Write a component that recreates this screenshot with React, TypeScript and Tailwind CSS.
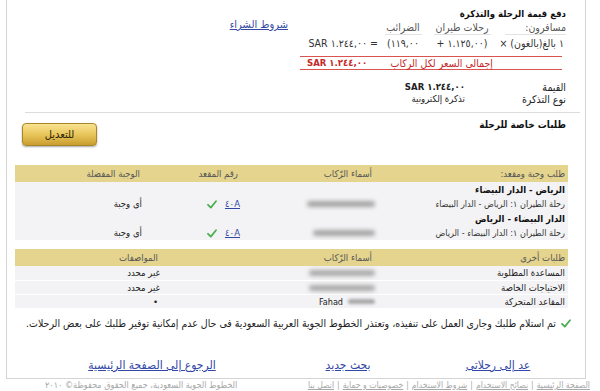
import React from "react";

const Check = () => (
  <svg width="10" height="9" viewBox="0 0 10 9" className="shrink-0">
    <path d="M1 4.8 L3.8 7.6 L9 1.2" fill="none" stroke="#4caf50" strokeWidth="1.8" strokeLinecap="round" strokeLinejoin="round" />
  </svg>
);

export default function App() {
  return (
    <div
      dir="ltr"
      className="w-[600px] h-[391px] bg-white overflow-hidden text-[9.5px] leading-[14px] text-[#222] [font-family:'DejaVu_Sans_Condensed','DejaVu_Sans',sans-serif] [font-stretch:condensed]"
    >
      <div dir="rtl" className="ml-[6px] w-[580px] h-[379px] border-l border-r border-b border-[#d4d4d4] flex flex-col">
        {/* Top: price section */}
        <div className="flex pr-[19px] pt-[7px]">
          <div className="w-[266px] shrink-0">
            <div className="font-bold h-[13px] leading-[13px] text-[#111]">دفع قيمة الرحلة والتذكرة</div>
            <div className="flex h-[15px] text-[#555] text-[10.5px]">
              <div className="w-[65px] flex">
                <span className="w-[61px] border-b border-[#e2e2e2] text-right whitespace-nowrap">مسافرون:</span>
              </div>
              <div className="w-[78px] flex justify-center">
                <span className="w-[57px] border-b border-[#e2e2e2] text-center whitespace-nowrap">رحلات طيران</span>
              </div>
              <div className="w-[40px] flex justify-center">
                <span className="w-[37px] border-b border-[#e2e2e2] text-center whitespace-nowrap">الضرائب</span>
              </div>
              <div className="flex-1" />
            </div>
            <div className="flex h-[16px] items-center text-[#333] text-[10.5px] whitespace-nowrap">
              <div className="w-[65px] text-right pr-[2px]">١ بالغ(بالغون) ×</div>
              <div className="w-[78px] text-center">(١.١٢٥,٠٠ +</div>
              <div className="w-[40px] text-center">١١٩,٠٠)</div>
              <div className="flex-1 text-right pr-[5px]">
                <span dir="ltr">SAR ١.٢٤٤,٠٠ =</span>
              </div>
            </div>
            <div className="mt-[5px] mr-[4px] w-[262px] h-[14px] border-t border-b border-[#d9534f] flex items-center text-[#c62828] whitespace-nowrap">
              <span className="pr-[69px] leading-[12px] text-[10.5px]">إجمالى السعر لكل الركاب</span>
              <span className="flex-1 text-left pl-[7px] font-bold leading-[12px]">
                <span dir="ltr">SAR ١.٢٤٤,٠٠</span>
              </span>
            </div>
            <div className="mt-[11px] flex h-[12px] items-center leading-[12px]">
              <span className="w-[101px] text-[#222] text-[10.5px]">القيمة</span>
              <span className="font-bold" dir="ltr">SAR ١.٢٤٤,٠٠</span>
            </div>
            <div className="flex h-[12px] items-center leading-[12px]">
              <span className="w-[101px] text-[#222] text-[10.5px]">نوع التذكرة</span>
              <span className="text-[#222]">تذكرة إلكترونية</span>
            </div>
          </div>
          <div className="mr-[12px] mt-[11px]">
            <a className="text-[#3247a5] underline whitespace-nowrap text-[11px]">شروط الشراء</a>
          </div>
        </div>

        <div className="mt-[7px] mr-[5px] ml-[18px] h-px bg-[#dcdcdc]" />

        {/* Special requests header */}
        <div className="flex justify-between items-start pr-[19px] pl-[15px]">
          <div className="mt-[5px] text-[10px] leading-[14px] font-bold text-[#111]">طلبات خاصة للرحلة</div>
          <button className="mt-[10px] w-[75px] h-[23px] rounded-[4px] border border-[#a8862a] bg-linear-to-b from-[#f8e390] via-[#e8c65a] to-[#c99d2e] shadow-[0_1px_2px_rgba(0,0,0,0.35)] text-[11px] leading-[20px] text-[#2d2206]">
            للتعديل
          </button>
        </div>

        {/* Table 1 */}
        <div className="mt-[19px] ml-[8px] mr-[17px]">
          <div className="flex h-[17px] items-center bg-[#e4d48e] text-[#555]">
            <div className="w-[190px] pr-[3px]">طلب وجبة ومقعد:</div>
            <div className="w-[135px] pr-[6px]">أسماء الرّكاب</div>
            <div className="w-[98px] pr-[5px]">رقم المقعد</div>
            <div className="flex-1 pr-[5px]">الوجبة المفضلة</div>
          </div>
          <div className="bg-[#f3f3f5]">
            <div className="flex h-[15px] items-center">
              <div className="pr-[3px] font-bold text-[#111]">الرياض - الدار البيضاء</div>
            </div>
            <div className="flex h-[14px] items-center">
              <div className="w-[190px] pr-[3px] text-[9px] text-[#333] whitespace-nowrap">رحلة الطيران ١: الرياض - الدار البيضاء</div>
              <div className="w-[135px] pr-[3px] flex">
                <span className="w-[68px] h-[6px] rounded-full bg-[#a4a4a4] blur-[2px]" />
              </div>
              <div className="w-[98px] pr-[3px] flex items-center gap-[8px]">
                <a className="text-[#3247a5] underline">٤٠A</a>
                <Check />
              </div>
              <div className="flex-1 pr-[3px] text-[#222]">أى وجبة</div>
            </div>
            <div className="flex h-[15px] items-center">
              <div className="pr-[3px] font-bold text-[#111]">الدار البيضاء - الرياض</div>
            </div>
            <div className="flex h-[14px] items-center">
              <div className="w-[190px] pr-[3px] text-[9px] text-[#333] whitespace-nowrap">رحلة الطيران ١: الدار البيضاء - الرياض</div>
              <div className="w-[135px] pr-[3px] flex">
                <span className="w-[62px] h-[6px] rounded-full bg-[#a4a4a4] blur-[2px]" />
              </div>
              <div className="w-[98px] pr-[3px] flex items-center gap-[8px]">
                <a className="text-[#3247a5] underline">٤٠A</a>
                <Check />
              </div>
              <div className="flex-1 pr-[3px] text-[#222]">أى وجبة</div>
            </div>
          </div>
        </div>

        {/* Table 2 */}
        <div className="mt-[9px] ml-[8px] mr-[17px]">
          <div className="flex h-[17px] items-center bg-[#e4d48e] text-[#555]">
            <div className="w-[190px] pr-[3px]">طلبات أخرى</div>
            <div className="w-[215px] pr-[6px]">أسماء الرّكاب</div>
            <div className="flex-1 pr-[5px]">المواصفات</div>
          </div>
          <div className="bg-[#f3f3f5] text-[#222]">
            <div className="flex h-[14px] items-center">
              <div className="w-[190px] pr-[3px]">المساعدة المطلوبة</div>
              <div className="w-[215px] pr-[3px] flex">
                <span className="w-[66px] h-[6px] rounded-full bg-[#a8a8a8] blur-[2px]" />
              </div>
              <div className="flex-1 pr-[3px]">غير محدد</div>
            </div>
            <div className="flex h-[14px] items-center border-t border-white">
              <div className="w-[190px] pr-[3px]">الاحتياجات الخاصة</div>
              <div className="w-[215px] pr-[3px] flex">
                <span className="w-[66px] h-[6px] rounded-full bg-[#a8a8a8] blur-[2px]" />
              </div>
              <div className="flex-1 pr-[3px]">غير محدد</div>
            </div>
            <div className="flex h-[14px] items-center border-t border-white">
              <div className="w-[190px] pr-[3px]">المقاعد المتحركة</div>
              <div className="w-[215px] pr-[3px] flex items-center gap-[5px]">
                <span className="w-[27px] h-[5px] rounded-full bg-[#a8a8a8] blur-[1.5px]" />
                <span className="text-[9px]" dir="ltr">Fahad</span>
              </div>
              <div className="flex-1 pr-[5px]">•</div>
            </div>
          </div>
        </div>

        {/* Confirmation */}
        <div className="mt-[8px] h-[14px] flex items-center gap-[5px] pr-[14px] whitespace-nowrap">
          <Check />
          <span className="text-[10.5px] text-[#222]">
            تم استلام طلبك وجارى العمل على تنفيذه، وتعتذر الخطوط الجوية العربية السعودية فى حال عدم إمكانية توفير طلبك على بعض الرحلات.
          </span>
        </div>

        {/* Links */}
        <div className="mt-[27px] h-[16px] flex pr-[12px] text-[12px] leading-[16px]">
          <div className="w-[150px] text-center">
            <a className="text-[#3247a5] underline">عد إلى رحلاتى</a>
          </div>
          <div className="w-[150px] text-center">
            <a className="text-[#3247a5] underline">بحث جديد</a>
          </div>
          <div className="w-[242px] text-center">
            <a className="text-[#3247a5] underline">الرجوع إلى الصفحة الرئيسية</a>
          </div>
        </div>
      </div>

      {/* Footer */}
      <div className="flex justify-between items-center h-[12px] leading-[12px] text-[#a8a8a8]">
        <div dir="rtl" className="pl-[45px] whitespace-nowrap text-[9px]">الخطوط الجوية السعودية، جميع الحقوق محفوظة© ٢٠١٠</div>
        <div dir="rtl" className="pr-[10px] flex gap-[3px] whitespace-nowrap text-[8.6px]">
          <a className="underline">الصفحة الرئيسية</a>
          <span>|</span>
          <a className="underline">نصائح الاستخدام</a>
          <span>|</span>
          <a className="underline">شروط الاستخدام</a>
          <span>|</span>
          <a className="underline">خصوصيات و حماية</a>
          <span>|</span>
          <a className="underline">اتصل بنا</a>
        </div>
      </div>
    </div>
  );
}
